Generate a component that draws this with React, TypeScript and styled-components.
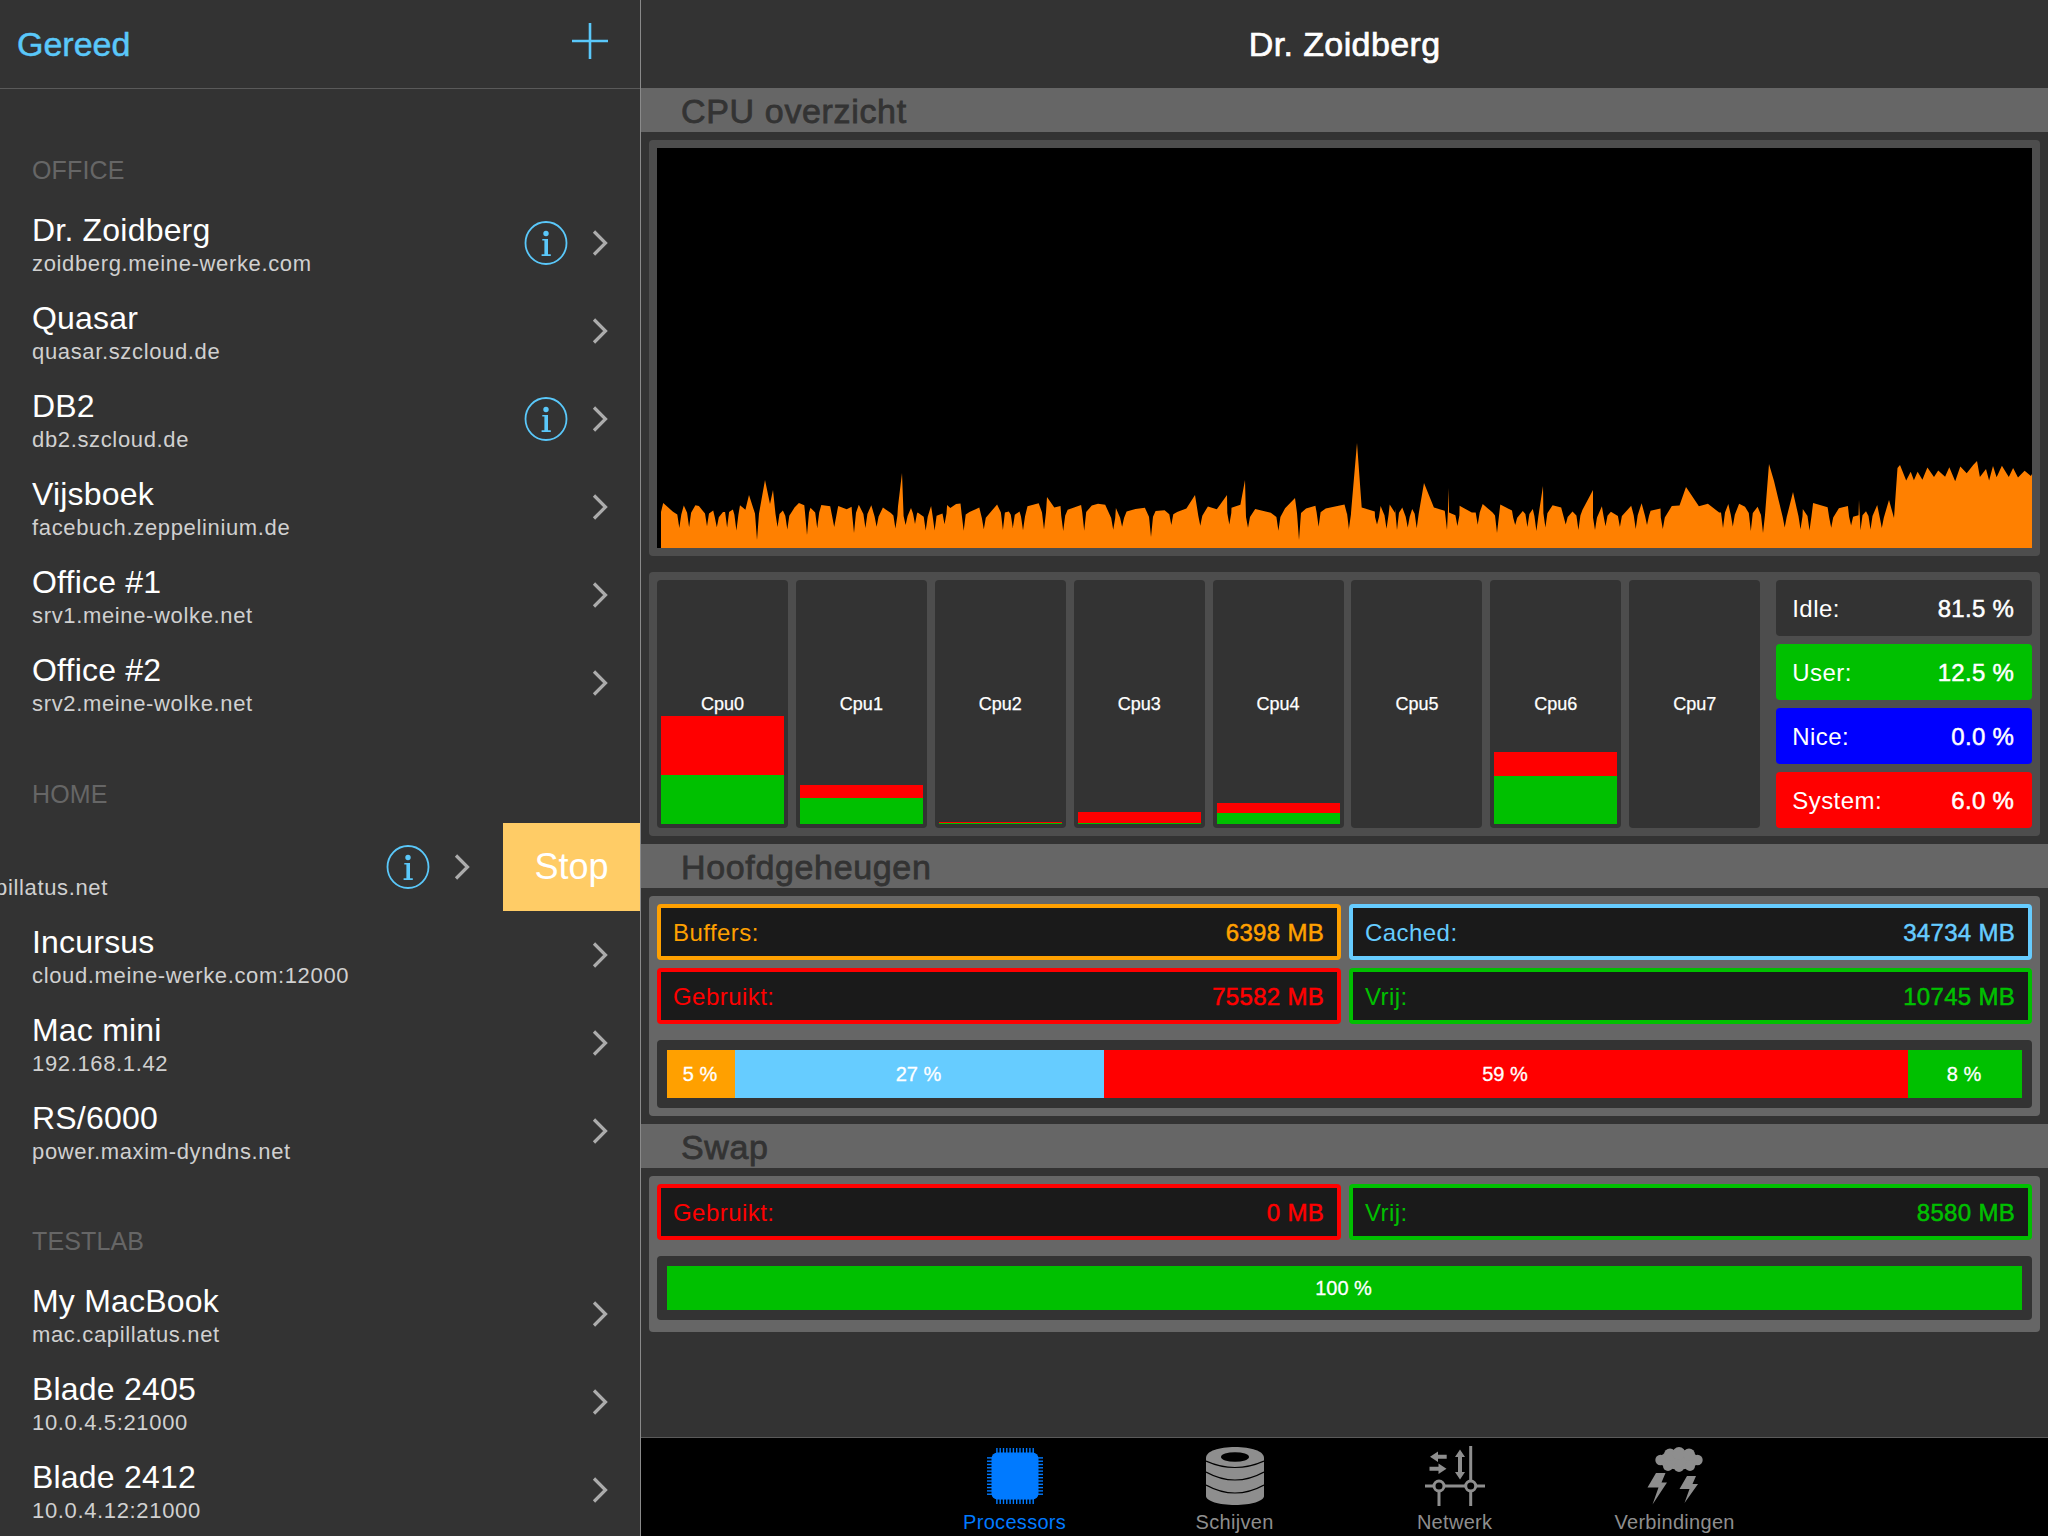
import React from "react"
import styled, { createGlobalStyle } from "styled-components"

const colors = {
	blue: "#5ac8fa",
	cached: "#66ccff",
	orange: "#ffa000",
	red: "#ff0000",
	green: "#00c000",
	navy: "#0000ff",
	active: "#007aff",
	tabGrey: "#8e8e8e",
}

const GlobalStyle = createGlobalStyle`
	html, body {
		margin: 0;
		padding: 0;
		background: #333333;
		font-family: "Liberation Sans", Arial, sans-serif;
	}
	* {
		box-sizing: border-box;
	}
`

const Page = styled.div`
	display: flex;
	width: 2048px;
	height: 1536px;
	overflow: hidden;
	background: #333333;
`

/* Sidebar */

const Sidebar = styled.aside`
	flex: 0 0 641px;
	height: 100%;
	overflow: hidden;
	border-right: 1px solid #8a8a8a;
`

const SidebarHeader = styled.header`
	display: flex;
	align-items: center;
	justify-content: space-between;
	height: 89px;
	padding: 0 32px 0 17px;
	border-bottom: 1px solid #5a5a5a;
`

const DoneLabel = styled.span`
	font-size: 34px;
	color: ${colors.blue};
	-webkit-text-stroke: 0.5px ${colors.blue};
`

const PlusIcon = styled.svg`
	display: block;
	margin-top: -6px;
`

const Group = styled.section<{ $top: number }>`
	margin-top: ${(props) => props.$top}px;
`

const GroupLabel = styled.div`
	display: flex;
	align-items: center;
	height: 60px;
	padding: 3px 0 0 32px;
	font-size: 25px;
	letter-spacing: 0.15px;
	color: #666666;
`

const Row = styled.div`
	display: flex;
	align-items: center;
	height: 88px;
	padding: 0 32px;
`

const RowText = styled.div`
	flex: 1;
	align-self: flex-start;
	padding-top: 13px;
`

const RowName = styled.div`
	font-size: 32px;
	line-height: 36px;
	letter-spacing: 0.2px;
	color: #ffffff;
`

const RowHost = styled.div`
	margin-top: 1px;
	font-size: 22px;
	line-height: 30px;
	letter-spacing: 0.65px;
	color: #d0d0d0;
`

const SwipedRow = styled.div`
	display: flex;
	align-items: center;
	height: 88px;
	overflow: hidden;
`

const SwipedHost = styled(RowHost)`
	flex: 1;
	align-self: flex-start;
	margin: 0 0 0 -5px;
	padding-top: 50px;
`

const StopButton = styled.div`
	display: flex;
	align-items: center;
	justify-content: center;
	flex: 0 0 137px;
	height: 88px;
	margin-left: 33px;
	background: #ffcc66;
	font-size: 36px;
	color: #ffffff;
`

const InfoSvg = styled.svg`
	display: block;
	flex: none;
	margin-right: 24px;
`

const ChevronSvg = styled.svg`
	display: block;
	flex: none;
`

const InfoIcon = () => (
	<InfoSvg width="44" height="44" viewBox="0 0 44 44">
		<ellipse cx="22" cy="22" rx="20.5" ry="21" fill="none" stroke={colors.blue} strokeWidth="1.8" />
		<circle cx="22" cy="12.5" r="2.7" fill={colors.blue} />
		<path
			d="M18.3 18 H24 V33.2 H26.8 V35 H17.6 V33.2 H20.4 V19.6 H18.3 Z"
			fill={colors.blue}
		/>
	</InfoSvg>
)

const Chevron = () => (
	<ChevronSvg width="16" height="26" viewBox="0 0 16 26">
		<path d="M2 1.5 L13.5 13 L2 24.5" fill="none" stroke="#acacac" strokeWidth="3.2" />
	</ChevronSvg>
)

type Server = { name: string; host: string; info?: boolean }

const office: Server[] = [
	{ name: "Dr. Zoidberg", host: "zoidberg.meine-werke.com", info: true },
	{ name: "Quasar", host: "quasar.szcloud.de" },
	{ name: "DB2", host: "db2.szcloud.de", info: true },
	{ name: "Vijsboek", host: "facebuch.zeppelinium.de" },
	{ name: "Office #1", host: "srv1.meine-wolke.net" },
	{ name: "Office #2", host: "srv2.meine-wolke.net" },
]

const home: Server[] = [
	{ name: "Incursus", host: "cloud.meine-werke.com:12000" },
	{ name: "Mac mini", host: "192.168.1.42" },
	{ name: "RS/6000", host: "power.maxim-dyndns.net" },
]

const testlab: Server[] = [
	{ name: "My MacBook", host: "mac.capillatus.net" },
	{ name: "Blade 2405", host: "10.0.4.5:21000" },
	{ name: "Blade 2412", host: "10.0.4.12:21000" },
]

const ServerRows = (props: { servers: Server[] }) => (
	<>
		{props.servers.map((server) => (
			<Row key={server.name}>
				<RowText>
					<RowName>{server.name}</RowName>
					<RowHost>{server.host}</RowHost>
				</RowText>
				{server.info ? <InfoIcon /> : null}
				<Chevron />
			</Row>
		))}
	</>
)

/* Main column */

const Main = styled.main`
	display: flex;
	flex-direction: column;
	flex: 1;
	height: 100%;
`

const TitleBar = styled.header`
	display: flex;
	align-items: center;
	justify-content: center;
	flex: 0 0 88px;
	font-size: 34px;
	letter-spacing: 0.4px;
	color: #ffffff;
	-webkit-text-stroke: 0.7px #ffffff;
`

const Content = styled.div`
	flex: 1;
`

const SectionBar = styled.h2`
	display: flex;
	align-items: center;
	height: 44px;
	margin: 0 0 8px;
	padding: 2px 0 0 40px;
	background: #666666;
	font-size: 34px;
	font-weight: 400;
	letter-spacing: 0.65px;
	color: #333333;
	-webkit-text-stroke: 0.8px #333333;
`

const Card = styled.div<{ $bg: string; $bottom?: number }>`
	margin: 0 8px 8px;
	padding: 8px 8px ${(props) => props.$bottom ?? 8}px;
	border-radius: 4px;
	background: ${(props) => props.$bg};
`

const ChartCard = styled(Card)`
	height: 416px;
	margin-bottom: 16px;
`

const ChartArea = styled.svg`
	display: block;
	background: #000000;
`

const CpuCard = styled(Card)`
	display: flex;
	height: 264px;
`

const CpuColumns = styled.div`
	display: grid;
	grid-template-columns: repeat(8, 131px);
	gap: 7.9px;
	flex: 0 0 1103px;
`

const CpuColumn = styled.div`
	position: relative;
	display: flex;
	align-items: center;
	justify-content: center;
	height: 248px;
	border-radius: 4px;
	background: #333333;
	font-size: 18px;
	color: #ffffff;
	-webkit-text-stroke: 0.25px #ffffff;
`

const CpuBar = styled.div`
	position: absolute;
	left: 4px;
	right: 4px;
	bottom: 4px;
	display: flex;
	flex-direction: column;
`

const CpuSegment = styled.div<{ $color: string }>`
	background: ${(props) => props.$color};
`

const CpuLabel = styled.span`
	position: relative;
`

const Stats = styled.div`
	display: flex;
	flex-direction: column;
	gap: 8px;
	flex: 0 0 256px;
	margin-left: 16px;
`

const StatRow = styled.div<{ $bg: string }>`
	display: flex;
	align-items: center;
	justify-content: space-between;
	height: 56px;
	padding: 2px 18px 0 16px;
	border-radius: 4px;
	background: ${(props) => props.$bg};
	font-size: 24px;
	letter-spacing: 0.45px;
	color: #ffffff;
`

const StrongValue = styled.span`
	-webkit-text-stroke: 0.5px currentColor;
	letter-spacing: 0.3px;
`

const ReadoutGrid = styled.div`
	display: grid;
	grid-template-columns: 684px 683px;
	gap: 8px;
`

const Readout = styled.div<{ $color: string }>`
	display: flex;
	align-items: center;
	justify-content: space-between;
	height: 56px;
	padding: 2px 13px 0 12px;
	border: 4px solid ${(props) => props.$color};
	border-radius: 4px;
	background: #1a1a1a;
	font-size: 24px;
	letter-spacing: 0.45px;
	color: ${(props) => props.$color};
`

const Track = styled.div<{ $height: number }>`
	display: flex;
	height: ${(props) => props.$height}px;
	margin-top: 16px;
	padding: 10px;
	border-radius: 4px;
	background: #333333;
`

const TrackSegment = styled.div<{ $color: string }>`
	display: flex;
	align-items: center;
	justify-content: center;
	padding-right: 2px;
	background: ${(props) => props.$color};
	font-size: 20px;
	color: #ffffff;
	-webkit-text-stroke: 0.3px #ffffff;
`

/* Tab bar */

const TabBar = styled.nav`
	display: flex;
	justify-content: center;
	flex: 0 0 99px;
	padding-top: 8px;
	border-top: 1px solid #5a5a5a;
	background: #000000;
`

const Tab = styled.div<{ $active?: boolean }>`
	display: flex;
	flex-direction: column;
	align-items: center;
	width: 220px;
	font-size: 20px;
	letter-spacing: 0.3px;
	color: ${(props) => (props.$active ? colors.active : colors.tabGrey)};
`

const TabIcon = styled.div`
	display: flex;
	align-items: center;
	justify-content: center;
	height: 60px;
`

const TabLabel = styled.span`
	margin-top: 4px;
	line-height: 24px;
`

const pinOffsets = Array.from({ length: 12 }, (_, i) => 9.2 + i * 3.3)

const CpuIcon = () => (
	<svg width="56" height="56" viewBox="0 0 56 56" fill={colors.active}>
		<rect x="4.5" y="4.5" width="47" height="47" rx="6" />
		{pinOffsets.map((offset) => (
			<g key={offset}>
				<rect x={offset} y="0" width="1.4" height="6" />
				<rect x={offset} y="50" width="1.4" height="6" />
				<rect x="0" y={offset} width="6" height="1.4" />
				<rect x="50" y={offset} width="6" height="1.4" />
			</g>
		))}
	</svg>
)

const DiskIcon = () => (
	<svg width="58" height="58" viewBox="0 0 58 58">
		<path
			d="M0 11 C0 4 13 0 29 0 S58 4 58 11 V49 C58 54 45 58 29 58 S0 54 0 49 Z"
			fill={colors.tabGrey}
		/>
		<ellipse cx="29" cy="10" rx="14" ry="4.8" fill="#000000" />
		<g fill="none" stroke="#000000" strokeWidth="1.2">
			<path d="M0 14 Q29 27 58 14" />
			<path d="M0 25 Q29 41 58 25" />
			<path d="M0 38 Q29 54 58 38" />
		</g>
	</svg>
)

const NetworkIcon = () => (
	<svg width="60" height="60" viewBox="0 0 60 60" fill={colors.tabGrey}>
		<g fill="none" stroke={colors.tabGrey} strokeWidth="3">
			<path d="M45.7 0 V60" />
			<path d="M14 40 V60" />
			<path d="M0 40 H60" />
			<circle cx="14" cy="40" r="5" fill="#000000" />
			<circle cx="45.7" cy="40" r="5" fill="#000000" />
		</g>
		<path d="M35 3.5 L40 11 H37 V26 H40 L35 33.5 L30 26 H33 V11 H30 Z" />
		<path d="M5 10.7 L13 5.5 V8.7 H21.7 V12.7 H13 V16 Z" />
		<path d="M21.5 22.7 L13.5 17.5 V20.7 H4.5 V24.7 H13.5 V28 Z" />
	</svg>
)

const StormIcon = () => (
	<svg width="58" height="60" viewBox="0 0 58 60" fill={colors.tabGrey}>
		<ellipse cx="33" cy="14" rx="20" ry="9.5" />
		<circle cx="24" cy="8.5" r="6" />
		<circle cx="33" cy="7.5" r="6.5" />
		<circle cx="43" cy="8.5" r="6" />
		<circle cx="14.5" cy="14" r="5.2" />
		<circle cx="51.5" cy="14" r="5.2" />
		<circle cx="22" cy="20" r="5" />
		<circle cx="33" cy="21" r="5" />
		<circle cx="44" cy="20" r="5" />
		<path d="M10 27 H19.5 L15.5 36.5 H21 L6.5 58.5 L12.5 41.5 H1.5 Z" />
		<path d="M41 30 H50 L46.5 38 H52 L38.5 57 L43.5 43 H33.5 Z" />
	</svg>
)

/* Chart data: peak and dip columns read off the reference, tall spikes pinned by hand */

const chartLeft = 661
const chartRight = 2032
const boxLeft = 657
const boxTop = 148
const boxWidth = 1375
const boxHeight = 400

const spikes: [number, number][] = [
	[749, 495], [765, 480], [770, 504], [773, 490], [902, 473], [1047, 497],
	[1195, 495], [1227, 495], [1245, 480], [1295, 498], [1357, 443], [1424, 483],
	[1449, 488], [1543, 486], [1593, 490], [1686, 487], [1769, 464], [1774, 481],
	[1793, 492], [1859, 500], [1889, 500],
]

const deepDips: [number, number][] = [
	[757, 540], [807, 535], [854, 533], [1151, 537], [1299, 540], [1349, 530],
	[1397, 530], [1447, 530], [1497, 533], [1595, 530], [1723, 528], [1763, 533],
]

const toLeftX = (v: number) => 640 + v / 2.24
const toRightX = (v: number) => 1340 + v / 2.215

const peakColumns = [
	...[52, 74, 98, 124, 132, 164, 186, 208, 224, 236, 320, 346, 356, 368, 382, 406, 426, 444, 463, 474, 490, 518, 544, 562, 578, 607, 622, 652, 688, 695, 708, 718, 738, 760, 800, 826, 850, 868, 893, 928, 942, 958, 988, 1012, 1026, 1042, 1066, 1090, 1110, 1131, 1155, 1175, 1203, 1224, 1272, 1292, 1325, 1345, 1378, 1413, 1445, 1492, 1513, 1536].map(toLeftX),
	...[10, 48, 77, 90, 110, 122, 138, 160, 208, 232, 265, 292, 316, 338, 355, 381, 405, 427, 471, 490, 515, 537, 580, 600, 645, 668, 688, 710, 735, 752, 795, 815, 840, 860, 884, 897, 925, 1003, 1025, 1048, 1080, 1105, 1125, 1165, 1190, 1216].map(toRightX),
]

const dipColumns = [
	...[88, 110, 150, 172, 195, 216, 308, 330, 397, 435, 505, 530, 572, 595, 616, 640, 660, 682, 725, 770, 813, 835, 858, 905, 948, 995, 1060, 1080, 1190, 1255, 1320, 1362, 1430, 1520].map(toLeftX),
	...[20, 82, 103, 150, 170, 260, 305, 388, 415, 435, 455, 500, 528, 588, 620, 655, 680, 715, 870, 910, 985, 1020, 1040, 1088, 1132, 1153, 1175, 1200].map(toRightX),
]

const buildChart = () => {
	let seed = 1337
	const rand = () => {
		seed = (seed * 16807) % 2147483647
		return seed / 2147483647
	}
	const points: [number, number][] = [...spikes]
	const isNear = (x: number, list: [number, number][]) => list.some(([px]) => Math.abs(px - x) < 3)
	peakColumns.forEach((x) => {
		if (!isNear(x, spikes)) points.push([x, 503 + rand() * 10])
	})
	// a dip is a thin notch cut into the hump it sits in
	const notches = [
		...dipColumns.map((x): [number, number] => [x, 524 + rand() * 7]),
		...deepDips,
	]
	notches.forEach(([x, y]) => {
		const shoulder = 512 + rand() * 6
		points.push([x - 2, shoulder], [x, y], [x + 2, shoulder])
	})
	// level stretch at the right hand end
	for (let x = 1900, i = 0; x < chartRight; i++) {
		points.push([x, i % 2 === 0 ? 463 + rand() * 9 : 473 + rand() * 9])
		x += 3 + rand() * 4
	}
	points.push([1894, 518], [1897.5, 468], [1977, 461], [chartRight, 474])
	points.sort((a, b) => a[0] - b[0])
	const outline = [[chartLeft, 548], [chartLeft, 512], ...points, [chartRight, 548]]
	return outline.map(([px, py]) => `${(px - boxLeft).toFixed(1)},${(py - boxTop).toFixed(1)}`).join(" ")
}

const chartPoints = buildChart()

// pixel heights of [system, user] for each core
const cpus: [number, number][] = [
	[59, 49],
	[13, 26],
	[1, 1],
	[11, 1],
	[10, 11],
	[0, 0],
	[24, 48],
	[0, 0],
]

const App = () => (
	<Page>
		<GlobalStyle />
		<Sidebar>
			<SidebarHeader>
				<DoneLabel>Gereed</DoneLabel>
				<PlusIcon width="36" height="36" viewBox="0 0 36 36">
					<path d="M18 0 V36 M0 18 H36" stroke={colors.blue} strokeWidth="2.6" />
				</PlusIcon>
			</SidebarHeader>
			<Group $top={50}>
				<GroupLabel>OFFICE</GroupLabel>
				<ServerRows servers={office} />
			</Group>
			<Group $top={36}>
				<GroupLabel>HOME</GroupLabel>
				<SwipedRow>
					<SwipedHost>pillatus.net</SwipedHost>
					<InfoIcon />
					<Chevron />
					<StopButton>Stop</StopButton>
				</SwipedRow>
				<ServerRows servers={home} />
			</Group>
			<Group $top={35}>
				<GroupLabel>TESTLAB</GroupLabel>
				<ServerRows servers={testlab} />
			</Group>
		</Sidebar>
		<Main>
			<TitleBar>Dr. Zoidberg</TitleBar>
			<Content>
				<SectionBar>CPU overzicht</SectionBar>
				<ChartCard $bg="#4d4d4d">
					<ChartArea width={boxWidth} height={boxHeight} viewBox={`0 0 ${boxWidth} ${boxHeight}`}>
						<polygon points={chartPoints} fill="#ff8000" />
					</ChartArea>
				</ChartCard>
				<CpuCard $bg="#4d4d4d">
					<CpuColumns>
						{cpus.map(([system, user], index) => (
							<CpuColumn key={index}>
								<CpuBar>
									<CpuSegment $color={colors.red} style={{ height: system }} />
									<CpuSegment $color={colors.green} style={{ height: user }} />
								</CpuBar>
								<CpuLabel>Cpu{index}</CpuLabel>
							</CpuColumn>
						))}
					</CpuColumns>
					<Stats>
						<StatRow $bg="#333333">
							<span>Idle:</span>
							<StrongValue>81.5 %</StrongValue>
						</StatRow>
						<StatRow $bg={colors.green}>
							<span>User:</span>
							<StrongValue>12.5 %</StrongValue>
						</StatRow>
						<StatRow $bg={colors.navy}>
							<span>Nice:</span>
							<StrongValue>0.0 %</StrongValue>
						</StatRow>
						<StatRow $bg={colors.red}>
							<span>System:</span>
							<StrongValue>6.0 %</StrongValue>
						</StatRow>
					</Stats>
				</CpuCard>
				<SectionBar>Hoofdgeheugen</SectionBar>
				<Card $bg="#666666">
					<ReadoutGrid>
						<Readout $color={colors.orange}>
							<span>Buffers:</span>
							<StrongValue>6398 MB</StrongValue>
						</Readout>
						<Readout $color={colors.cached}>
							<span>Cached:</span>
							<StrongValue>34734 MB</StrongValue>
						</Readout>
						<Readout $color={colors.red}>
							<span>Gebruikt:</span>
							<StrongValue>75582 MB</StrongValue>
						</Readout>
						<Readout $color={colors.green}>
							<span>Vrij:</span>
							<StrongValue>10745 MB</StrongValue>
						</Readout>
					</ReadoutGrid>
					<Track $height={68}>
						<TrackSegment $color={colors.orange} style={{ width: 68 }}>5 %</TrackSegment>
						<TrackSegment $color={colors.cached} style={{ width: 369 }}>27 %</TrackSegment>
						<TrackSegment $color={colors.red} style={{ width: 804 }}>59 %</TrackSegment>
						<TrackSegment $color={colors.green} style={{ width: 114 }}>8 %</TrackSegment>
					</Track>
				</Card>
				<SectionBar>Swap</SectionBar>
				<Card $bg="#666666" $bottom={12}>
					<ReadoutGrid>
						<Readout $color={colors.red}>
							<span>Gebruikt:</span>
							<StrongValue>0 MB</StrongValue>
						</Readout>
						<Readout $color={colors.green}>
							<span>Vrij:</span>
							<StrongValue>8580 MB</StrongValue>
						</Readout>
					</ReadoutGrid>
					<Track $height={64}>
						<TrackSegment $color={colors.green} style={{ width: 1355 }}>100 %</TrackSegment>
					</Track>
				</Card>
			</Content>
			<TabBar>
				<Tab $active>
					<TabIcon><CpuIcon /></TabIcon>
					<TabLabel>Processors</TabLabel>
				</Tab>
				<Tab>
					<TabIcon><DiskIcon /></TabIcon>
					<TabLabel>Schijven</TabLabel>
				</Tab>
				<Tab>
					<TabIcon><NetworkIcon /></TabIcon>
					<TabLabel>Netwerk</TabLabel>
				</Tab>
				<Tab>
					<TabIcon><StormIcon /></TabIcon>
					<TabLabel>Verbindingen</TabLabel>
				</Tab>
			</TabBar>
		</Main>
	</Page>
)

export default App
